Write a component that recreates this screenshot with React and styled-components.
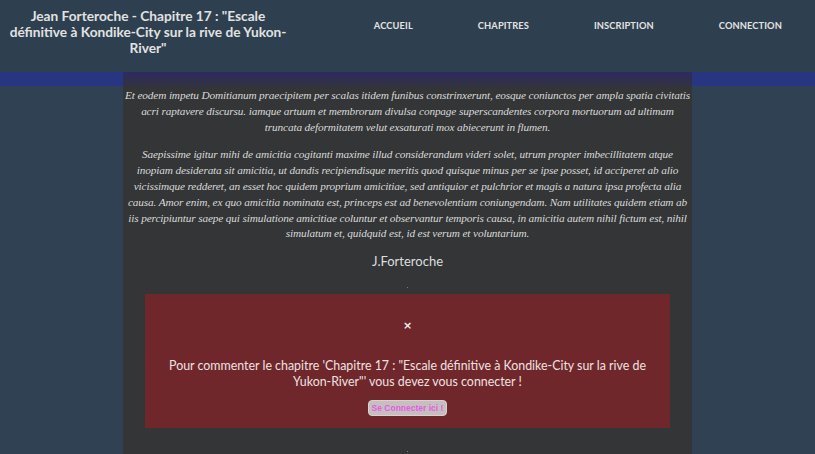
import React from "react";
import styled, { createGlobalStyle } from "styled-components";

const Global = createGlobalStyle`
  html, body { margin: 0; padding: 0; }
  body {
    background: #2f4152;
    font-family: "Lato", "Noto Sans", sans-serif;
    overflow: hidden;
  }
`;

const Header = styled.header`
  display: flex;
  align-items: flex-start;
  height: 72px;
  background: #2e3f4f;
`;

const Title = styled.h1`
  margin: 0;
  width: 296px;
  box-sizing: border-box;
  padding: 8px 8px 0;
  text-align: center;
  font-size: 13.7px;
  line-height: 16px;
  font-weight: 700;
  color: #e2e2e2;
`;

const Nav = styled.nav`
  flex: 1;
  display: flex;
  justify-content: flex-end;
  gap: 65px;
  padding: 20px 33px 0 0;
`;

const NavLink = styled.a`
  font-size: 9.3px;
  font-weight: 700;
  letter-spacing: 0.1px;
  color: #e4e4e4;
  text-transform: uppercase;
  line-height: 12px;
`;

const Page = styled.main`
  background: linear-gradient(#283580 0, #283580 14px, #2f4152 14px);
  min-height: 382px;
`;

const Column = styled.section`
  width: 569px;
  margin: 0 auto;
  min-height: 382px;
  padding: 16px 0 0;
  box-sizing: border-box;
  background: linear-gradient(#2e2a62 0, #333536 18px);
  display: flex;
  flex-direction: column;
  align-items: center;
`;

const Para = styled.p`
  margin: 0 0 12px;
  font-family: "Liberation Serif", "DejaVu Serif", serif;
  font-style: italic;
  font-size: 11.3px;
  letter-spacing: -0.15px;
  line-height: 15.8px;
  color: #d9d9d9;
  text-align: center;
`;

const Signature = styled.div`
  font-size: 13px;
  line-height: 14px;
  color: #dedede;
`;

const Dot = styled.span`
  display: block;
  width: 1px;
  height: 1px;
  margin: ${(p) => p.$top}px 0 6px;
  background: #777;
`;

const Alert = styled.div`
  width: 525px;
  height: 134px;
  box-sizing: border-box;
  background: #6f272b;
  display: flex;
  flex-direction: column;
  align-items: center;
  padding-top: 26px;
`;

const Close = styled.span`
  font-family: "DejaVu Sans", sans-serif;
  font-size: 11px;
  font-weight: 700;
  color: #f0f0f0;
  line-height: 12px;
`;

const Message = styled.p`
  margin: 26px 0 0;
  padding: 0 10px;
  font-size: 12.4px;
  line-height: 16px;
  color: #f0e2e2;
  text-align: center;
`;

const Button = styled.button`
  margin-top: 10px;
  height: 16px;
  padding: 0 3px;
  border: 1px solid #d9d2d2;
  border-radius: 4px;
  background: #c6bfbf;
  color: #e85ae4;
  font-family: "Liberation Sans", Arial, sans-serif;
  font-weight: 700;
  font-size: 8.5px;
  line-height: 14px;
  cursor: pointer;
`;

export default function App() {
  return (
    <>
      <Global />
      <Header>
        <Title>
          Jean Forteroche - Chapitre 17 : "Escale définitive à Kondike-City sur la rive de Yukon-River"
        </Title>
        <Nav>
          <NavLink>Accueil</NavLink>
          <NavLink>Chapitres</NavLink>
          <NavLink>Inscription</NavLink>
          <NavLink>Connection</NavLink>
        </Nav>
      </Header>
      <Page>
        <Column>
          <Para>
            Et eodem impetu Domitianum praecipitem per scalas itidem funibus constrinxerunt, eosque coniunctos per ampla spatia civitatis acri raptavere discursu. iamque artuum et membrorum divulsa conpage superscandentes corpora mortuorum ad ultimam truncata deformitatem velut exsaturati mox abiecerunt in flumen.
          </Para>
          <Para>
            Saepissime igitur mihi de amicitia cogitanti maxime illud considerandum videri solet, utrum propter imbecillitatem atque inopiam desiderata sit amicitia, ut dandis recipiendisque meritis quod quisque minus per se ipse posset, id acciperet ab alio vicissimque redderet, an esset hoc quidem proprium amicitiae, sed antiquior et pulchrior et magis a natura ipsa profecta alia causa. Amor enim, ex quo amicitia nominata est, princeps est ad benevolentiam coniungendam. Nam utilitates quidem etiam ab iis percipiuntur saepe qui simulatione amicitiae coluntur et observantur temporis causa, in amicitia autem nihil fictum est, nihil simulatum et, quidquid est, id est verum et voluntarium.
          </Para>
          <Signature>J.Forteroche</Signature>
          <Dot $top={19} />
          <Alert>
            <Close>×</Close>
            <Message>
              Pour commenter le chapitre 'Chapitre 17 : "Escale définitive à Kondike-City sur la rive de Yukon-River"' vous devez vous connecter !
            </Message>
            <Button>Se Connecter ici !</Button>
          </Alert>
          <Dot $top={23} />
        </Column>
      </Page>
    </>
  );
}
